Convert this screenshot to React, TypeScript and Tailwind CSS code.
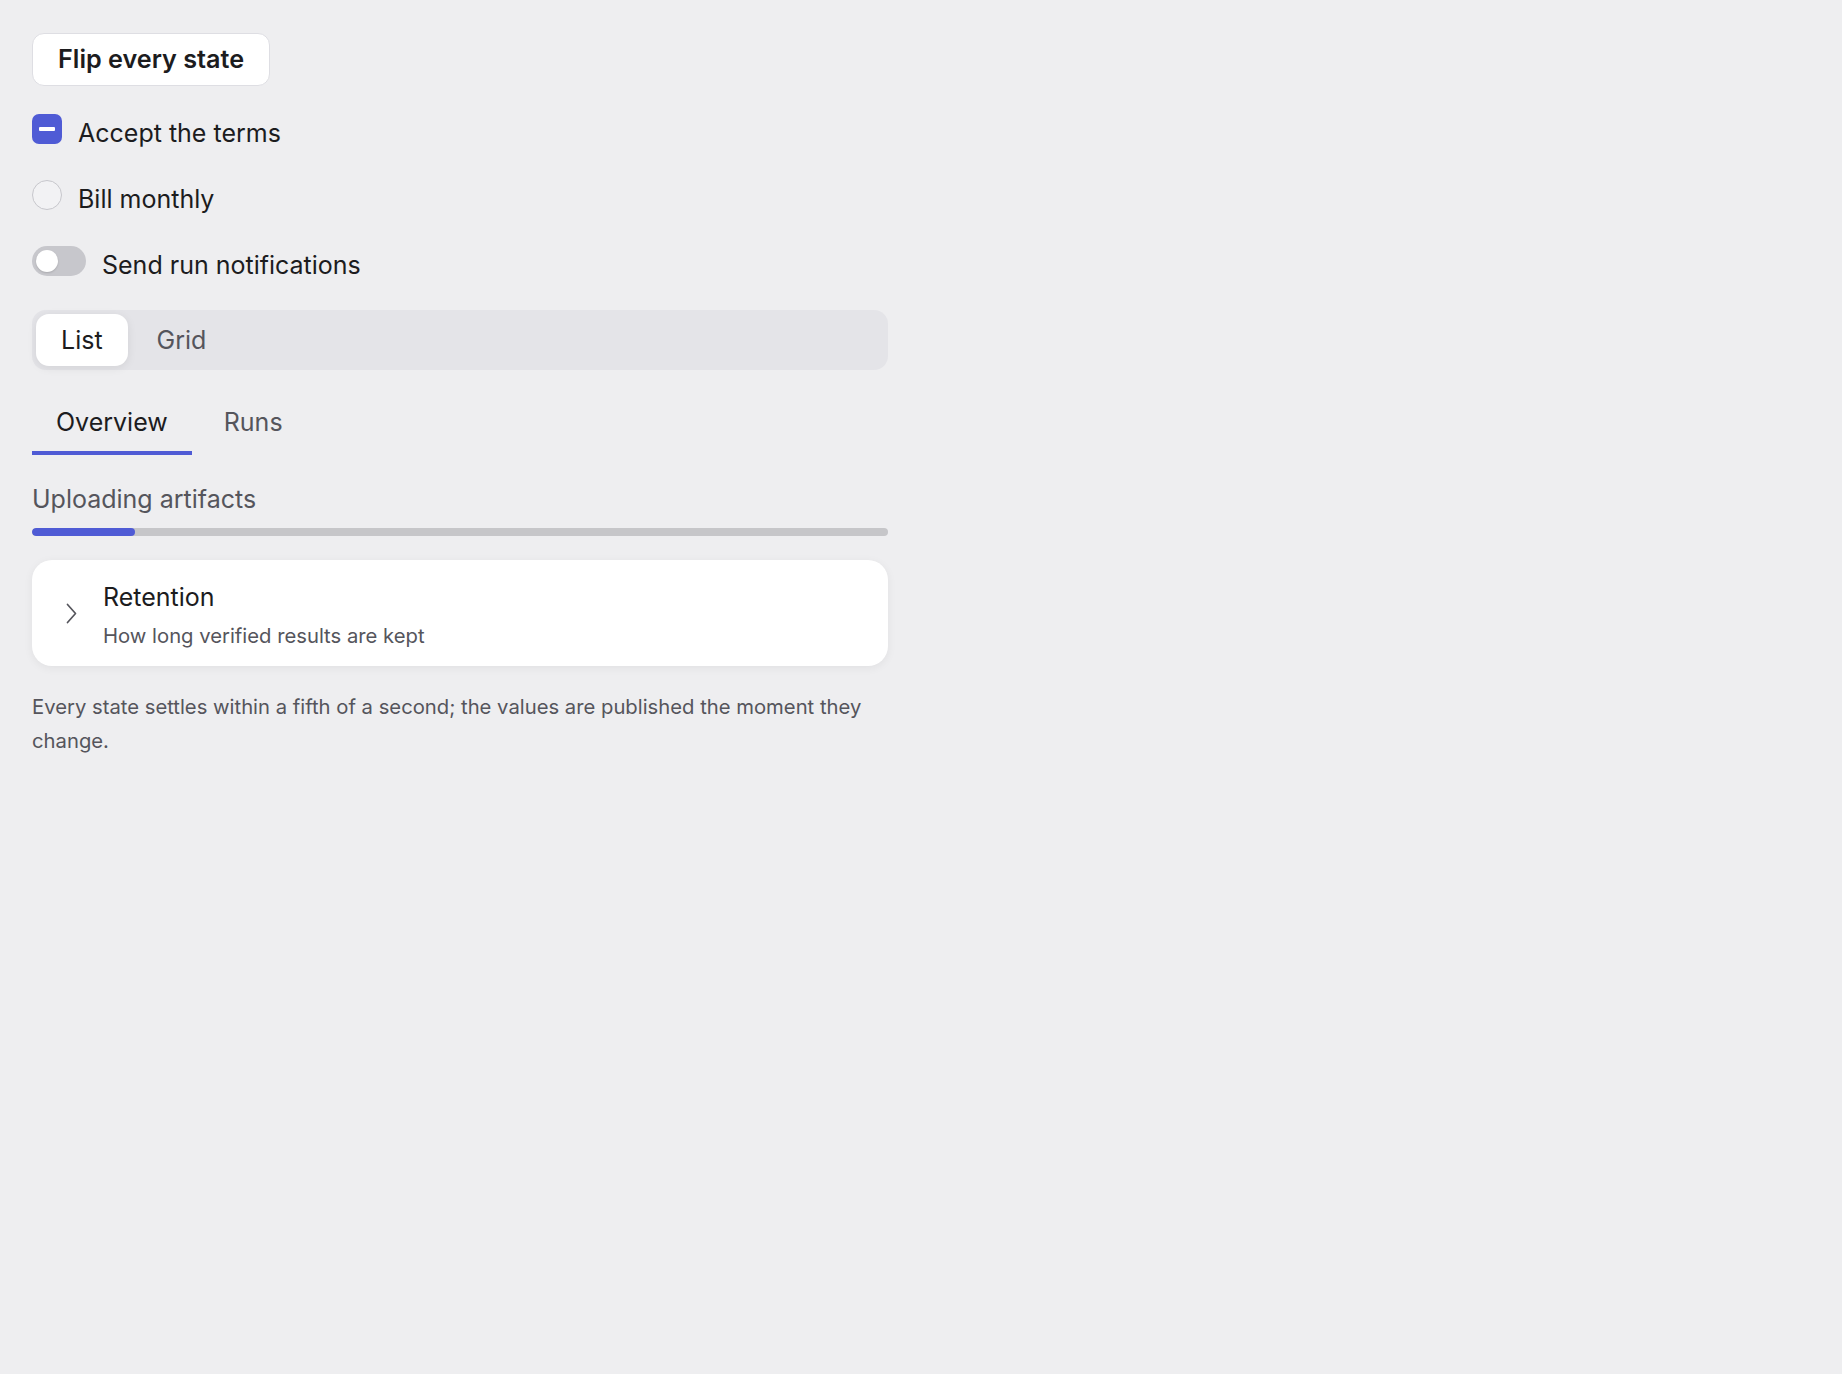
import { useState } from "react";

function Checkbox({ label }: { label: string }) {
  return (
    <div className="flex h-[30px] items-center gap-[16px]">
      <span className="flex h-[30px] w-[30px] items-center justify-center rounded-[7px] bg-[#4f5bd5]">
        <span className="h-[4px] w-[16px] rounded-[1px] bg-white" />
      </span>
      <span className="pt-[7px] text-[25px] leading-[38px] text-[#1c1c1e]">{label}</span>
    </div>
  );
}

function Radio({ label }: { label: string }) {
  return (
    <div className="flex h-[30px] items-center gap-[16px]">
      <span className="h-[30px] w-[30px] rounded-full border-[1.5px] border-[#c7c7cc] bg-[#f2f2f4]" />
      <span className="pt-[7px] text-[25px] leading-[38px] text-[#1c1c1e]">{label}</span>
    </div>
  );
}

function Toggle({ label }: { label: string }) {
  return (
    <div className="flex h-[30px] items-center gap-[16px]">
      <span className="flex h-[30px] w-[54px] items-center rounded-full bg-[#c7c7cc] px-[4px]">
        <span className="h-[22px] w-[22px] rounded-full bg-white shadow-[0_1px_2px_rgba(0,0,0,0.15)]" />
      </span>
      <span className="pt-[7px] text-[25px] leading-[38px] text-[#1c1c1e]">{label}</span>
    </div>
  );
}

export default function App() {
  const [view, setView] = useState("List");
  const [tab, setTab] = useState("Overview");

  return (
    <div
      className="min-h-screen bg-[#eeeef0] text-[#1c1c1e]"
      style={{ fontFamily: "Inter, 'Noto Sans', sans-serif" }}
    >
      <div className="flex w-[888px] flex-col pl-[32px] pt-[33px]">
        <button className="h-[53px] self-start rounded-[12px] border border-[#dedee3] bg-white px-[25px] text-[25.2px] font-semibold text-[#1c1c1e]">
          Flip every state
        </button>

        <div className="mt-[28px] flex flex-col gap-[36px]">
          <Checkbox label="Accept the terms" />
          <Radio label="Bill monthly" />
          <Toggle label="Send run notifications" />
        </div>

        <div className="mt-[34px] flex h-[60px] items-center gap-[4px] rounded-[14px] bg-[#e4e4e8] px-[4px]">
          {["List", "Grid"].map((v) => (
            <button
              key={v}
              onClick={() => setView(v)}
              className={
                view === v
                  ? "h-[52px] rounded-[13px] bg-white px-[25px] pt-[2px] text-[25px] text-[#1c1c1e] shadow-[0_2px_10px_rgba(0,0,0,0.08)]"
                  : "h-[52px] rounded-[13px] px-[25px] pt-[2px] text-[25px] text-[#55555c]"
              }
            >
              {v}
            </button>
          ))}
        </div>

        <div className="mt-[22px] flex gap-[8px]">
          {["Overview", "Runs"].map((t) => (
            <button
              key={t}
              onClick={() => setTab(t)}
              className={
                tab === t
                  ? "border-b-[4px] border-[#4f5bd5] px-[24px] pb-[10px] pt-[11px] text-[25px] leading-[38px] text-[#1c1c1e]"
                  : "border-b-[4px] border-transparent px-[24px] pb-[10px] pt-[11px] text-[25px] leading-[38px] text-[#55555c]"
              }
            >
              {t}
            </button>
          ))}
        </div>

        <p className="mt-[25px] text-[25px] leading-[38px] text-[#55555c]">Uploading artifacts</p>
        <div className="mt-[10px] h-[8px] w-full overflow-hidden rounded-full bg-[#c6c6c9]">
          <div className="h-full rounded-full bg-[#4f5bd5]" style={{ width: "12%" }} />
        </div>

        <div className="mt-[24px] flex items-center gap-[18px] rounded-[20px] bg-white pb-[15px] pl-[25px] pt-[19px] shadow-[0_2px_10px_rgba(0,0,0,0.06)]">
          <span className="mb-[4px] flex w-[28px] justify-center">
            <svg width="11" height="21" viewBox="0 0 11 21" fill="none">
              <path d="M1.5 1.5 L9.5 10.5 L1.5 19.5" stroke="#55555c" strokeWidth="1.7" strokeLinecap="round" strokeLinejoin="round" />
            </svg>
          </span>
          <div className="flex flex-col">
            <span className="text-[25px] leading-[36px] text-[#1c1c1e]">Retention</span>
            <span className="mt-[6px] text-[20.25px] leading-[30px] text-[#55555c]">How long verified results are kept</span>
          </div>
        </div>

        <p className="mt-[24px] text-[20.25px] leading-[34px] text-[#55555c]">
          Every state settles within a fifth of a second; the values are published the moment they change.
        </p>
      </div>
    </div>
  );
}
